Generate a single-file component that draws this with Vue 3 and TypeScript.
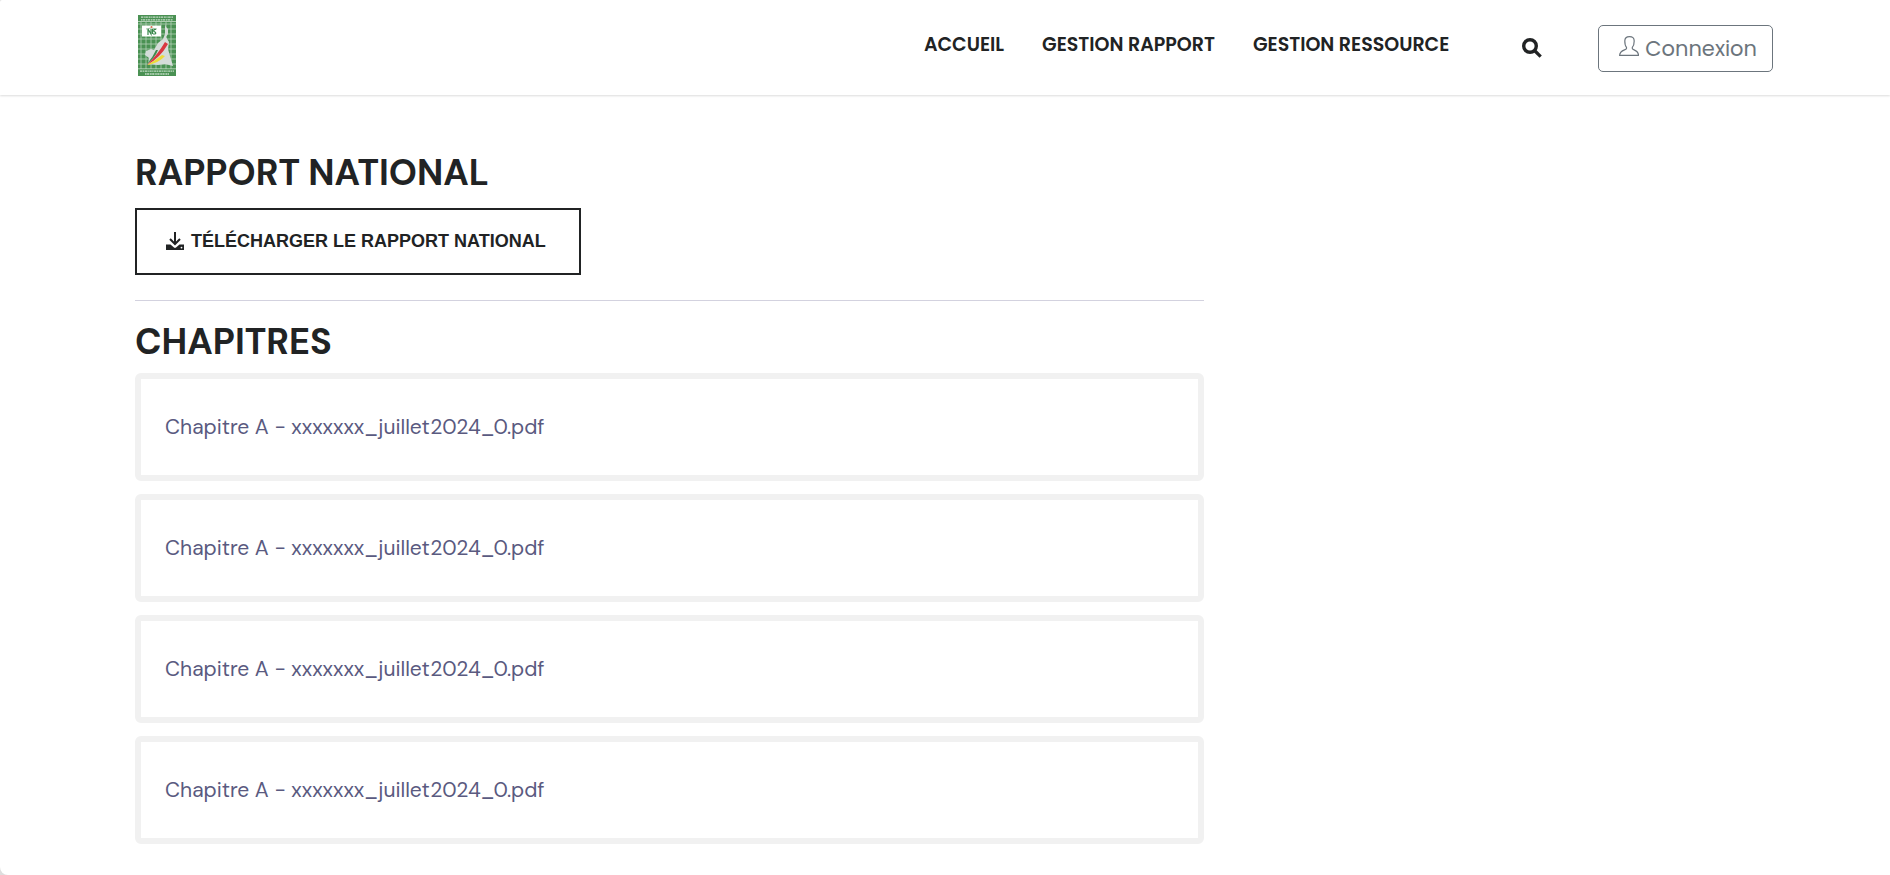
<script setup lang="ts">
interface NavLink {
  label: string
  href: string
}

interface Chapter {
  id: number
  title: string
}

const links: NavLink[] = [
  { label: 'ACCUEIL', href: '#accueil' },
  { label: 'GESTION RAPPORT', href: '#rapport' },
  { label: 'GESTION RESSOURCE', href: '#ressource' },
]

const chapters: Chapter[] = [1, 2, 3, 4].map((id) => ({
  id,
  title: 'Chapitre A - xxxxxxx_juillet2024_0.pdf',
}))

const gridX: number[] = [3, 8, 13, 18, 23, 28, 33]
const gridY: number[] = [9, 14, 19, 24, 29, 34, 39, 44, 49]
</script>

<template>
  <div class="page">
    <header class="header">
      <a class="logo" href="#accueil" aria-label="Institut National de la Statistique">
        <svg viewBox="0 0 38 61" width="38" height="61" aria-hidden="true">
          <rect width="38" height="61" fill="#4a9153" />
          <g stroke="#b4d1b8" stroke-width="0.8">
            <path v-for="x in gridX" :key="'x' + x" :d="`M${x} 7V54`" />
            <path v-for="y in gridY" :key="'y' + y" :d="`M0 ${y}H38`" />
          </g>
          <path d="M0 6.500H38M0 53.800H38" stroke="#c5dcc8" stroke-width="0.8" />
          <g stroke="#c4dcc7" stroke-width="1.3">
            <path d="M3 2.200H35" stroke-dasharray="2 0.6 1.2 0.5 2.6 0.7" />
            <path d="M3 4.800H35" stroke-dasharray="1.4 0.5 2.4 0.7" />
            <path d="M2 56.200H36" stroke-dasharray="2.3 0.5 1.3 0.6" />
            <path d="M7 59H31" stroke-dasharray="1.6 0.5 2.2 0.8" />
          </g>
          <path
            d="M27 9L28 12L30 14L30 19L28 22L31 27L30 34L32 41L35 51L27 49L20 50L10 49L11 43L7 40L8 36L13 34L16 35L20 28L25 24L27 19Z"
            fill="#d5dcd9"
          />
          <path d="M9 49Q17 43 20 35L18 35Q15 42 9 49" fill="#3f8a4c" />
          <path d="M9 50Q22 43 30 29L27 27Q20 39 9 50" fill="#d93640" />
          <path d="M9 50Q21 48 27 41L24 40Q18 45 9 50" fill="#eddb3a" />
          <rect x="4" y="10.500" width="19" height="11" fill="#fff" />
          <path
            d="M10 20V14M10 14L13 19V14M14.500 14V19M18 14.500Q15 14 16 16.500Q19 18 17 19H15"
            fill="none"
            stroke="#37884a"
            stroke-width="1.200"
          />
          <path d="M8 14Q13 12 19 14" fill="none" stroke="#76a77d" stroke-width="0.7" />
          <circle cx="13.500" cy="12" r="1" fill="#dc6c4d" />
        </svg>
      </a>

      <nav class="nav" aria-label="Navigation principale">
        <a v-for="link in links" :key="link.label" :href="link.href">{{ link.label }}</a>
      </nav>

      <button class="search" type="button" aria-label="Rechercher">
        <svg viewBox="0 0 20 20" width="20" height="20" aria-hidden="true">
          <circle cx="8" cy="8" r="6.300" fill="none" stroke="#212324" stroke-width="3.400" />
          <path d="M12.500 12.500L18.700 18.700" stroke="#212324" stroke-width="3.200" />
        </svg>
      </button>

      <button class="login" type="button">
        <svg viewBox="0 0 20 20" width="20" height="20" aria-hidden="true">
          <path
            d="M7.500 12.500V11.300C6.300 10.100 5.800 7.800 5.800 5C5.800 2 7.500.600 10.500.600S15.200 2 15.200 5C15.200 7.800 14.500 10.100 13.300 11.300V12.500C13.300 14.300 19.400 13.500 19.500 19.400H.600C.800 13.500 7.500 14.300 7.500 12.500Z"
            fill="none"
            stroke="#6c757d"
            stroke-width="1.200"
            stroke-linejoin="round"
          />
        </svg>
        <span>Connexion</span>
      </button>
    </header>

    <main class="content">
      <div class="column">
        <h2>RAPPORT NATIONAL</h2>
        <button class="download" type="button">
          <svg viewBox="0 0 18 18" width="18" height="18" aria-hidden="true">
            <path
              d="M0 12.500H4.500L8 15.500Q9 16.300 10 15.500L13.500 12.500H18V18H0Z"
              fill="#212324"
            />
            <path d="M9 0V12M4 7L9 12L14 7" fill="none" stroke="#212324" stroke-width="2" />
            <circle cx="15.500" cy="15.600" r="0.900" fill="#fff" />
          </svg>
          <span>TÉLÉCHARGER LE RAPPORT NATIONAL</span>
        </button>
        <hr />
        <h2>CHAPITRES</h2>
        <ul class="chapters">
          <li v-for="chapter in chapters" :key="chapter.id">
            <a :href="`#chapitre-${chapter.id}`">{{ chapter.title }}</a>
          </li>
        </ul>
      </div>
    </main>
  </div>
</template>

<style>
html {
  background: #dedede;
}

body {
  margin: 0;
}
</style>

<style scoped>
.page {
  box-sizing: border-box;
  min-height: 100vh;
  background: #fff;
  border-radius: 2px 0 0 8px;
  color: #212324;
  font-family: Poppins, sans-serif;
}

.header {
  box-sizing: border-box;
  display: flex;
  align-items: flex-start;
  min-height: 95px;
  padding: 15px 117px 15px 138px;
  box-shadow: 0 1px 2px rgba(0, 0, 0, 0.14);
}

.logo {
  margin-right: auto;
}

.logo svg {
  display: block;
}

.nav {
  display: flex;
  gap: 38px;
  padding-top: 18px;
  font-size: 19px;
  font-weight: 600;
  line-height: 24px;
}

.nav a {
  color: inherit;
  text-decoration: none;
}

button {
  background: transparent;
  color: inherit;
  cursor: pointer;
}

.search {
  display: flex;
  margin: 23px 56px 0 73px;
  padding: 0;
  border: 0;
}

.login {
  box-sizing: border-box;
  display: flex;
  gap: 6px;
  height: 47px;
  margin-top: 10px;
  padding: 10px 15px 10px 20px;
  border: 1px solid #6c757d;
  border-radius: 5px;
  color: #6c757d;
  font: 400 21px/26px Poppins, sans-serif;
}

.content {
  padding: 54px 135px 31px;
}

.column {
  width: 66%;
}

h2 {
  margin: 0;
  font: 700 36px/48px "DM Sans", sans-serif;
}

.download {
  display: flex;
  align-items: center;
  gap: 7px;
  margin-top: 11px;
  padding: 20px 33px 20px 29px;
  border: 2px solid #212324;
  font: 700 18px/23px "Liberation Sans", Arial, sans-serif;
}

.download svg {
  margin-bottom: 2px;
}

hr {
  height: 1px;
  margin: 25px 0 17px;
  border: 0;
  background: #d3d2df;
}

.chapters {
  display: grid;
  gap: 13px;
  margin: 7px 0 0;
  padding: 0;
  list-style: none;
}

.chapters li {
  padding: 33px 24px;
  border: 6px solid #f1f1f1;
  border-radius: 6px;
}

.chapters a {
  display: block;
  color: #5a5a80;
  font: 400 21px/30px "DM Sans", sans-serif;
  text-decoration: none;
}
</style>
